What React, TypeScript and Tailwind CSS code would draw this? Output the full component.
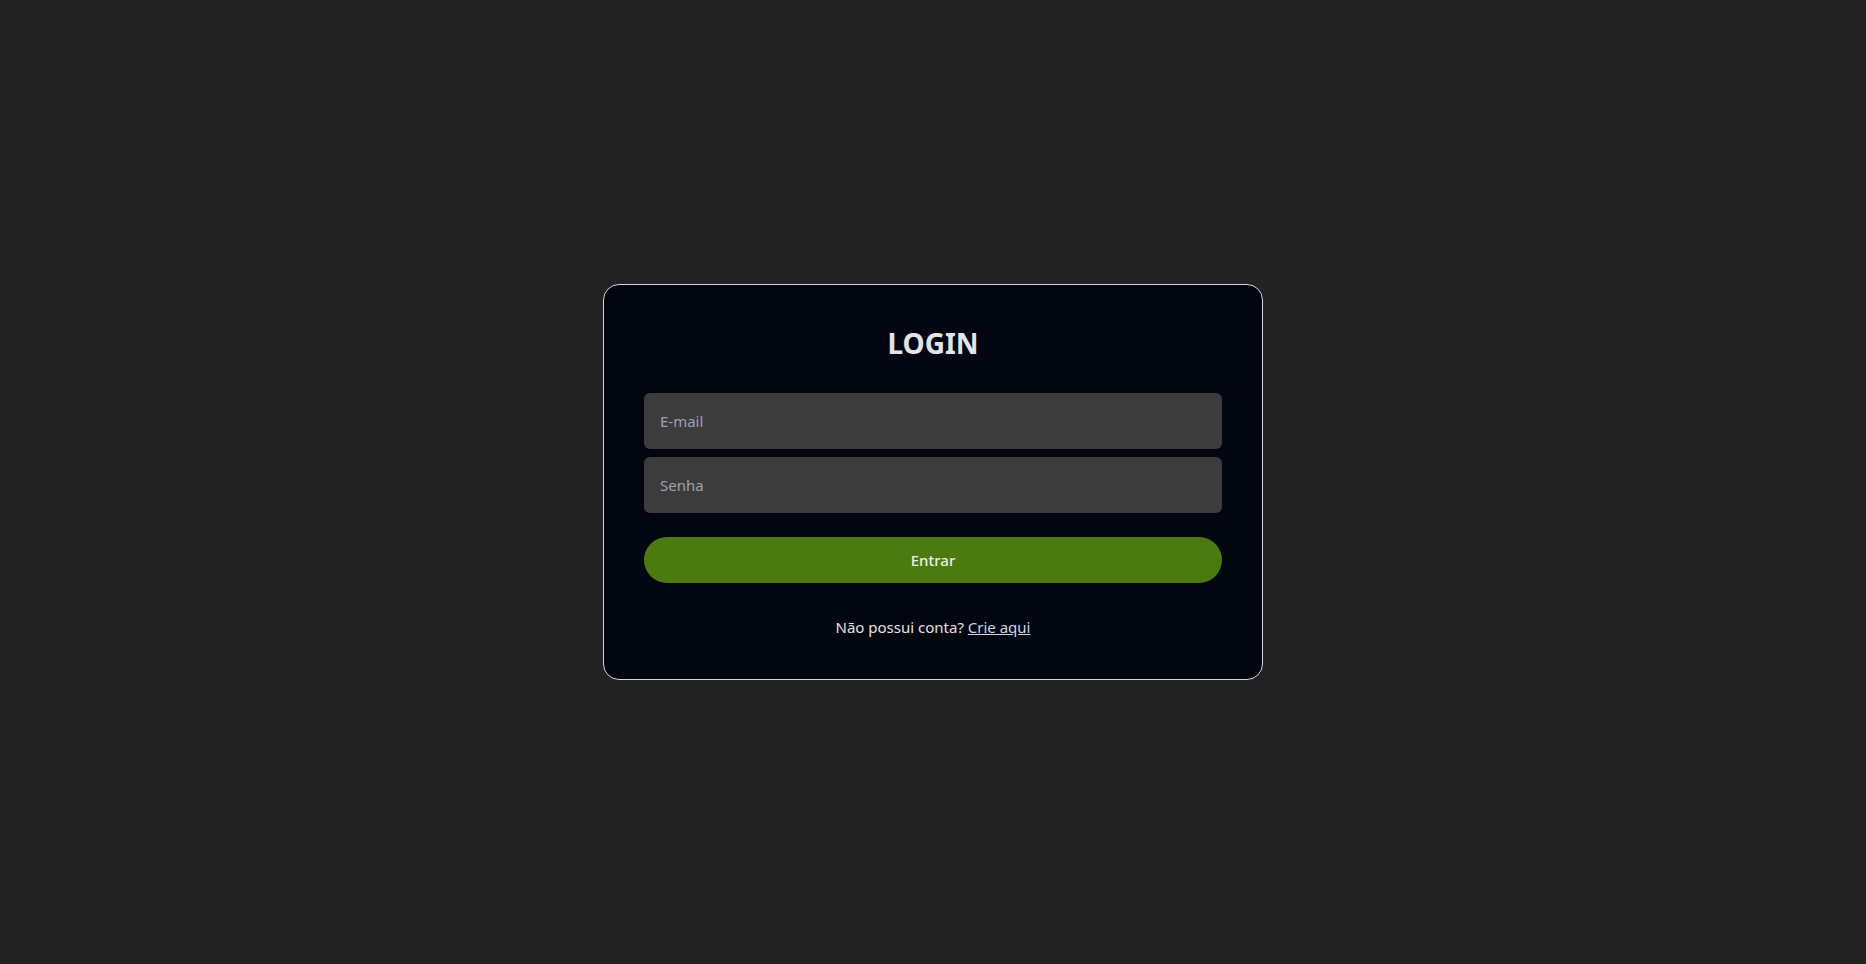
import { useState } from "react";

const Login = () => {
  const [email, setEmail] = useState("");
  const [password, setPassword] = useState("");

  return (
    <div
      className="min-h-screen w-full bg-[#222222] flex items-center justify-center"
      style={{ fontFamily: '"Noto Sans", "Open Sans", sans-serif' }}
    >
      <form
        className="w-[660px] bg-[#020611] border border-[#d4d4d8] rounded-2xl px-10 pt-10 pb-10 flex flex-col"
        onSubmit={(e) => e.preventDefault()}
      >
        <h1 className="text-center text-[28px] leading-9 font-bold text-[#e2e4e8] mb-8">
          LOGIN
        </h1>
        <div className="flex flex-col gap-2">
          <input
            type="email"
            placeholder="E-mail"
            value={email}
            onChange={(e) => setEmail(e.target.value)}
            className="h-14 w-full rounded-md bg-[#3c3c3c] px-4 text-[15px] text-[#e5e7eb] placeholder:text-[#9aa3b2] outline-none"
          />
          <input
            type="password"
            placeholder="Senha"
            value={password}
            onChange={(e) => setPassword(e.target.value)}
            className="h-14 w-full rounded-md bg-[#3c3c3c] px-4 text-[15px] text-[#e5e7eb] placeholder:text-[#9aa3b2] outline-none"
          />
        </div>
        <button
          type="submit"
          className="mt-6 h-[46px] w-full rounded-full bg-[#4b7b0e] text-[15px] font-medium text-[#eef0e6]"
        >
          Entrar
        </button>
        <p className="mt-8 text-center text-[15px] leading-6 text-[#e6e1de]">
          Não possui conta?{" "}
          <a href="#" className="underline text-[#cfd6e2]">
            Crie aqui
          </a>
        </p>
      </form>
    </div>
  );
};

export default function App() {
  return <Login />;
}
